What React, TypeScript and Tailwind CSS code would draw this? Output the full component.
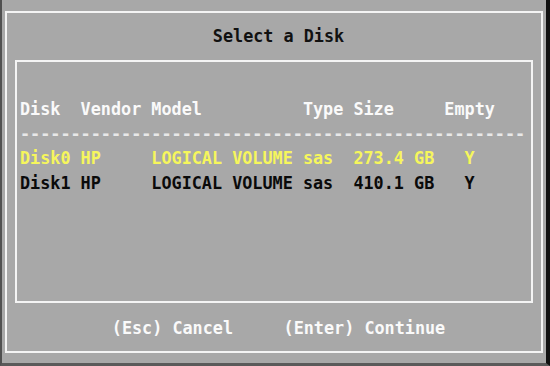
const header = "Disk  Vendor Model          Type Size     Empty";
const rule = "-".repeat(50);

const disks = [
  { line: "Disk0 HP     LOGICAL VOLUME sas  273.4 GB   Y", selected: true },
  { line: "Disk1 HP     LOGICAL VOLUME sas  410.1 GB   Y", selected: false },
];

export default function App() {
  return (
    <div className="w-[550px] h-[366px] bg-[#a8a8a8] border-l-2 border-l-[#505050] border-r-4 border-r-[#101010] border-b-[3px] border-b-[#5a5a5a] pt-[11px] px-[3px] font-['DejaVu_Sans_Mono',monospace] font-bold text-[16.8px] whitespace-pre">
      <div className="h-[342px] border-2 border-[#f4f4f4] flex flex-col px-[8px]">
        {/* Title */}
        <div className="h-[47px] flex items-center justify-center pl-[9px] text-[#111]">
          Select a Disk
        </div>

        {/* Disk list */}
        <div className="h-[243px] border-2 border-[#f4f4f4] pt-[35px] pl-[3px] leading-[24.5px]">
          <div className="text-[#fafafa]">{header}</div>
          <div className="text-[#e8e8e8]">{rule}</div>
          {disks.map((d) => (
            <div key={d.line} className={d.selected ? "text-[#f6f65c]" : "text-[#0a0a0a]"}>
              {d.line}
            </div>
          ))}
        </div>

        {/* Footer keys */}
        <div className="flex-1 flex items-center justify-center pl-[9px] pt-[3px] text-[#fafafa]">
          (Esc) Cancel     (Enter) Continue
        </div>
      </div>
    </div>
  );
}
